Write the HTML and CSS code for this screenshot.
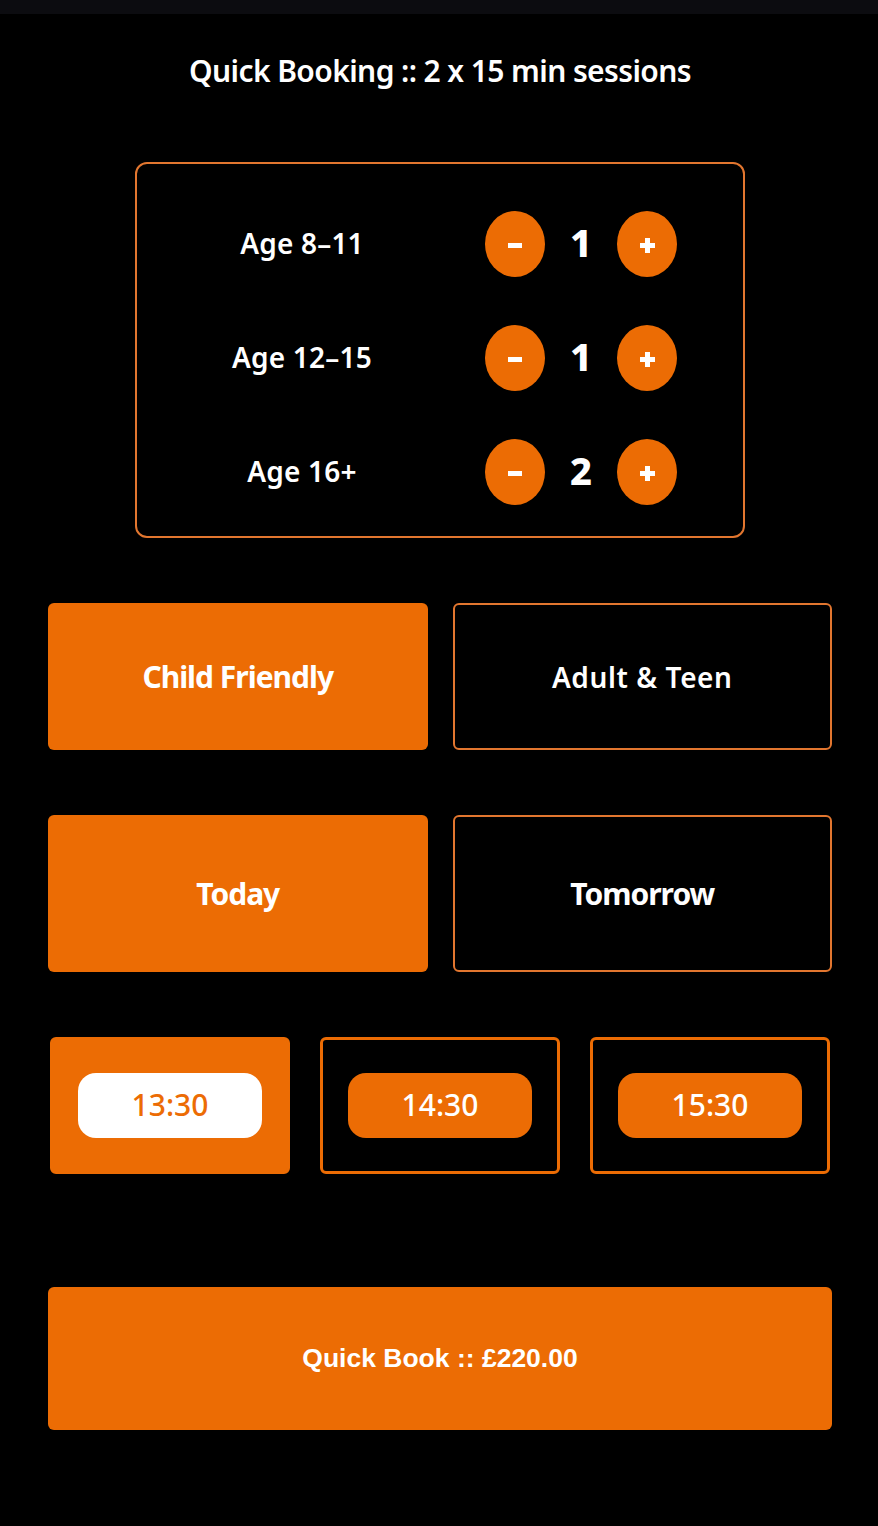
FILE: index.html
```html
<!DOCTYPE html>
<html lang="en">
<head>
<meta charset="utf-8">
<title>Quick Booking</title>
<link rel="stylesheet" href="styles.css">
</head>
<body>
<div class="topbar"></div>
<main class="page">
  <h1 class="title">Quick Booking :: 2 x 15 min sessions</h1>

  <section class="counter-box">
    <div class="counter-row">
      <div class="age-label">Age 8–11</div>
      <div class="controls">
        <button class="round-btn" aria-label="decrease"><span class="icon-minus"></span></button>
        <span class="qty">1</span>
        <button class="round-btn" aria-label="increase"><span class="icon-plus"></span></button>
      </div>
    </div>
    <div class="counter-row">
      <div class="age-label">Age 12–15</div>
      <div class="controls">
        <button class="round-btn" aria-label="decrease"><span class="icon-minus"></span></button>
        <span class="qty">1</span>
        <button class="round-btn" aria-label="increase"><span class="icon-plus"></span></button>
      </div>
    </div>
    <div class="counter-row">
      <div class="age-label">Age 16+</div>
      <div class="controls">
        <button class="round-btn" aria-label="decrease"><span class="icon-minus"></span></button>
        <span class="qty">2</span>
        <button class="round-btn" aria-label="increase"><span class="icon-plus"></span></button>
      </div>
    </div>
  </section>

  <div class="choice-row">
    <button class="choice selected bold-cond">Child Friendly</button>
    <button class="choice outline semi">Adult &amp; Teen</button>
  </div>

  <div class="choice-row tall">
    <button class="choice selected bold-cond">Today</button>
    <button class="choice outline bold-cond">Tomorrow</button>
  </div>

  <div class="slots">
    <div class="slot selected"><span class="pill">13:30</span></div>
    <div class="slot"><span class="pill">14:30</span></div>
    <div class="slot"><span class="pill">15:30</span></div>
  </div>

  <button class="book-btn">Quick Book :: £220.00</button>
</main>
</body>
</html>
```

FILE: styles.css
```css
* { box-sizing: border-box; }

html, body {
  margin: 0;
  padding: 0;
  background: #000;
  color: #fff;
  font-family: "Noto Sans", "Open Sans", sans-serif;
}

.topbar {
  height: 14px;
  background: #0c0c10;
}

.page {
  width: 784px;
  margin-left: 48px;
  display: flex;
  flex-direction: column;
}

.title {
  margin: 0;
  height: 148px;
  padding-top: 37px;
  text-align: center;
  font-size: 30px;
  font-weight: 600;
  letter-spacing: -0.6px;
  line-height: 40px;
}

.counter-box {
  width: 610px;
  align-self: center;
  border: 2px solid #e2762f;
  border-radius: 12px;
  padding: 47px 0 31px 33px;
  display: flex;
  flex-direction: column;
  gap: 48px;
}

.counter-row {
  display: grid;
  grid-template-columns: 264px auto;
  column-gap: 51px;
  align-items: center;
  height: 66px;
}

.age-label {
  text-align: center;
  font-size: 28px;
  font-weight: 600;
  letter-spacing: 0.2px;
  padding-bottom: 2px;
}

.controls {
  display: flex;
  align-items: center;
}

.round-btn {
  position: relative;
  width: 60px;
  height: 66px;
  border-radius: 50%;
  border: none;
  background: #ec6c04;
  padding: 0;
  display: flex;
  align-items: center;
  justify-content: center;
}

.icon-minus {
  display: block;
  width: 14px;
  height: 5px;
  background: #fff;
  margin-top: 3px;
}

.icon-plus {
  position: relative;
  display: block;
  width: 15px;
  height: 15px;
  margin-top: 3px;
}

.icon-plus::before,
.icon-plus::after {
  content: "";
  position: absolute;
  background: #fff;
}

.icon-plus::before {
  left: 0;
  top: 5px;
  width: 15px;
  height: 5px;
}

.icon-plus::after {
  left: 5px;
  top: 0;
  width: 5px;
  height: 15px;
}

.qty {
  width: 72px;
  text-align: center;
  font-size: 38px;
  font-weight: 800;
  line-height: 1;
  padding-bottom: 4px;
}

.choice-row {
  display: grid;
  grid-template-columns: 1fr 1fr;
  column-gap: 25px;
  margin-top: 65px;
  height: 147px;
}

.choice-row.tall {
  height: 157px;
}

.choice {
  border-radius: 6px;
  color: #fff;
  font-family: "Noto Sans", sans-serif;
  font-size: 30px;
  padding: 0;
}

.choice.selected {
  background: #ec6c04;
  border: none;
}

.choice.outline {
  background: #000;
  border: 2px solid #e2762f;
}

.bold-cond {
  font-weight: 700;
  letter-spacing: -1px;
}

.semi {
  font-weight: 600;
  letter-spacing: 0.6px;
  font-size: 28px;
}

.slots {
  display: grid;
  grid-template-columns: repeat(3, 1fr);
  column-gap: 30px;
  padding: 0 2px;
  margin-top: 65px;
  height: 137px;
}

.slot {
  border: 3px solid #ec6c04;
  border-radius: 6px;
  display: flex;
  align-items: center;
  justify-content: center;
}

.slot.selected {
  background: #ec6c04;
}

.pill {
  width: 184px;
  height: 65px;
  border-radius: 18px;
  background: #ec6c04;
  color: #fff;
  font-size: 30px;
  font-weight: 500;
  display: flex;
  align-items: center;
  justify-content: center;
  padding-bottom: 2px;
}

.slot.selected .pill {
  background: #fff;
  color: #ec6c04;
}

.book-btn {
  margin-top: 113px;
  height: 143px;
  border: none;
  border-radius: 6px;
  background: #ec6c04;
  color: #fff;
  font-family: "Liberation Sans", Arial, sans-serif;
  font-size: 26.5px;
  font-weight: 700;
}
```
